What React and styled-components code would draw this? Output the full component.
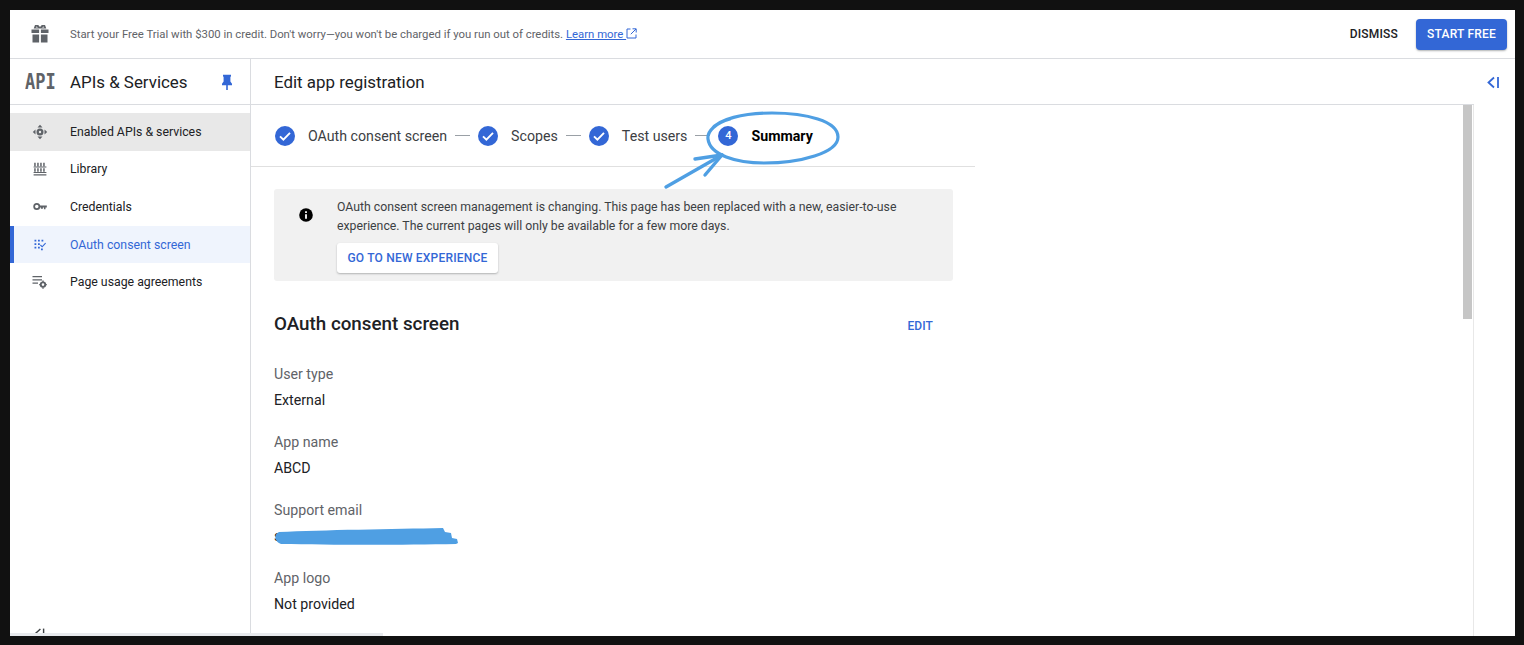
import React from "react";
import styled, { createGlobalStyle } from "styled-components";

const GlobalStyle = createGlobalStyle`
  html, body {
    margin: 0;
    height: 100%;
    background: #111;
    overflow: hidden;
  }
  * { box-sizing: border-box; }
`;

const navItems = [
  { label: "Enabled APIs & services", icon: "move", state: "hover" },
  { label: "Library", icon: "library" },
  { label: "Credentials", icon: "key" },
  { label: "OAuth consent screen", icon: "oauth", state: "active" },
  { label: "Page usage agreements", icon: "usage" },
];

const steps = [
  { label: "OAuth consent screen", done: true },
  { label: "Scopes", done: true },
  { label: "Test users", done: true },
  { label: "Summary", number: 4 },
];

const fields = [
  { label: "User type", value: "External" },
  { label: "App name", value: "ABCD" },
  { label: "Support email", value: "s", redacted: true },
  { label: "App logo", value: "Not provided" },
];

function GiftIcon() {
  return (
    <svg width="20" height="20" viewBox="0 0 20 20" fill="#5f6368">
      <path d="M1.500 5.500h7.600v3.600H1.500zM10.900 5.500h7.600v3.600h-7.600zM2.500 10.500h6.600v8h-6.600zM10.900 10.500h6.600v8h-6.600z" />
      <path d="M5 1h3.200L10 3l1.800-2H15l1.300 3.500H3.700z" />
      <path d="M6.400 2.500l-.6 1h2.300zM13.600 2.500l.6 1h-2.300z" fill="#fff" />
    </svg>
  );
}

function NavIcon({ name }) {
  if (name === "move") {
    return (
      <svg width="16" height="16" viewBox="0 0 16 16" fill="#5f6368">
        <path d="M8 .8l2.500 2.700h-5zM8 15.200l2.500-2.700h-5zM.8 8l2.700-2.500v5zM15.200 8l-2.700-2.500v5z" />
        <path d="M8 4.500a3.500 3.500 0 1 1 0 7 3.500 3.500 0 0 1 0-7zm0 2.300a1.200 1.200 0 1 0 0 2.400 1.200 1.200 0 0 0 0-2.400z" />
      </svg>
    );
  }
  if (name === "library") {
    return (
      <svg width="14" height="14" viewBox="0 0 14 14" fill="#5f6368">
        <path d="M1.200 .8h1.500v3.600H1.200zM4.200 .8h1.500v3.600H4.200zM7.200 .8h1.500v3.600H7.200zM10.200 .8h1.500v3.600h-1.500zM1.200 6.200h1.500v3.600H1.200zM4.200 6.200h1.500v3.600H4.200zM7.200 6.200h1.500v3.600H7.200zM10.200 6.200h1.500v3.600h-1.500z" />
        <path d="M.6 4.600h12.800v.9H.6zM.6 10h12.800v.9H.6zM.6 12.200h12.800v1.300H.6z" />
      </svg>
    );
  }
  if (name === "key") {
    return (
      <svg width="14" height="9" viewBox="0 0 16 10" fill="none">
        <circle cx="4.300" cy="5" r="3" stroke="#5f6368" strokeWidth="2" />
        <path d="M7.500 3.800h8.300v2.400h-1.500v1.800h-1.800V6.200h-1.200v1.400H9V6.200H7.500z" fill="#5f6368" />
      </svg>
    );
  }
  if (name === "oauth") {
    return (
      <svg width="12" height="12" viewBox="0 0 12 12" fill="#3367d6">
        <path d="M.5.800h1.800v1.800H.5zM4 .8h1.800v1.800H4zM7.500.8h1.800v1.800H7.500zM.5 4.200h1.800V6H.5zM4 4.200h1.800V6H4zM.5 7.800h1.800v1.800H.5zM4 7.800h1.800v1.800H4z" />
        <path d="M6.800 5.600l1.400 1.400 3-3.200.8.800-3.800 4-2.200-2.200zM7 9.400h1.800v1.800H7z" />
      </svg>
    );
  }
  return (
    <svg width="16" height="14" viewBox="0 0 16 14" fill="#5f6368">
      <path d="M.5 1h9.500v1.300H.5zM.5 4.200h9.500v1.300H.5zM.5 7.400h5.500v1.300H.5z" />
      <path d="M11 6.400a3.200 3.200 0 1 1 0 6.400 3.200 3.200 0 0 1 0-6.400zm0 1.900a1.300 1.300 0 1 0 0 2.600 1.300 1.300 0 0 0 0-2.600z" />
      <path d="M10.300 5.500h1.400v1.500h-1.400zM10.300 12.200h1.400v1.500h-1.400zM7.200 9h1.500v1.300H7.200zM13.300 9h1.500v1.300h-1.500z" />
    </svg>
  );
}

function PinIcon() {
  return (
    <svg width="12" height="16" viewBox="0 0 12 16" fill="#3367d6">
      <path d="M2 .8h8v1.400L9.400 3v4.600l1.600 2.200v1.500H6.800V16H5.200v-4.700H1V9.800l1.600-2.200V3L2 2.200z" />
    </svg>
  );
}

function CollapseIcon({ color, size = 15 }) {
  return (
    <svg width={size} height={size} viewBox="0 0 15 15" fill="none" stroke={color} strokeWidth="1.800">
      <path d="M8 2.500L2.500 7.500 8 12.500" />
      <path d="M12 2v11" />
    </svg>
  );
}

function ExternalIcon() {
  return (
    <svg width="11" height="11" viewBox="0 0 11 11" fill="none" stroke="#3367d6" strokeWidth="1">
      <path d="M4.500 1H1v9h9V6.500" />
      <path d="M6.500 .8h3.700v3.700M10 1L4.800 6.200" />
    </svg>
  );
}

function CheckBadge() {
  return (
    <svg width="20" height="20" viewBox="0 0 20 20">
      <circle cx="10" cy="10" r="10" fill="#3367d6" />
      <path d="M5 10.300l3.400 3.400 6.600-6.800" fill="none" stroke="#fff" strokeWidth="1.900" />
    </svg>
  );
}

function InfoIcon() {
  return (
    <svg width="14" height="14" viewBox="0 0 14 14">
      <circle cx="7" cy="7" r="6.800" fill="#000" />
      <path d="M6.100 6.200h1.800v4.600H6.100zM6.100 3.300h1.800v1.800H6.100z" fill="#fff" />
    </svg>
  );
}

function SummaryScribble() {
  return (
    <Scribble width="190" height="90" viewBox="0 0 190 90" fill="none" stroke="#4f9fe3" strokeLinecap="round" strokeLinejoin="round">
      <path
        d="M51 25C58 14 84 8 112 8c34 0 66 8 66 24 0 16-38 26-74 26-28 0-54-8-56-24-1-8 8-16 22-20"
        strokeWidth="3.200"
      />
      <path d="M6 82L62 50" strokeWidth="3.400" />
      <path d="M35 54L62 50 45 70" strokeWidth="3.400" />
    </Scribble>
  );
}

export default function App() {
  return (
    <>
      <GlobalStyle />
      <Frame>
        <Banner>
          <GiftSlot>
            <GiftIcon />
          </GiftSlot>
          <BannerText>
            Start your Free Trial with $300 in credit. Don't worry—you won't be charged if you run out of credits.{" "}
            <BannerLink>
              Learn more <ExternalIcon />
            </BannerLink>
          </BannerText>
          <DismissButton>DISMISS</DismissButton>
          <StartButton>START FREE</StartButton>
        </Banner>
        <Body>
          <Sidebar>
            <SidebarHeader>
              <ApiMark>API</ApiMark>
              <SidebarTitle>APIs &amp; Services</SidebarTitle>
              <PinIcon />
            </SidebarHeader>
            <NavList>
              {navItems.map((item) => (
                <NavRow key={item.label} $state={item.state}>
                  <NavIconSlot>
                    <NavIcon name={item.icon} />
                  </NavIconSlot>
                  {item.label}
                </NavRow>
              ))}
            </NavList>
            <SidebarFooter>
              <CollapseIcon color="#3c4043" size={12} />
            </SidebarFooter>
            <BottomScroll />
          </Sidebar>
          <Main>
            <PageHeader>Edit app registration</PageHeader>
            <ScrollArea>
              <Content>
                <Stepper>
                  {steps.map((step, index) => (
                    <React.Fragment key={step.label}>
                      {index > 0 && <StepLine />}
                      <Step>
                        {step.done ? <CheckBadge /> : <NumberBadge>{step.number}</NumberBadge>}
                        <StepLabel $current={!step.done}>{step.label}</StepLabel>
                      </Step>
                    </React.Fragment>
                  ))}
                  <SummaryScribble />
                </Stepper>
                <Details>
                  <Notice>
                    <NoticeIcon>
                      <InfoIcon />
                    </NoticeIcon>
                    <NoticeBody>
                      <NoticeText>
                        OAuth consent screen management is changing. This page has been replaced with a new, easier-to-use
                        experience. The current pages will only be available for a few more days.
                      </NoticeText>
                      <NoticeButton>GO TO NEW EXPERIENCE</NoticeButton>
                    </NoticeBody>
                  </Notice>
                  <SectionHead>
                    <SectionTitle>OAuth consent screen</SectionTitle>
                    <EditButton>EDIT</EditButton>
                  </SectionHead>
                  {fields.map((field) => (
                    <Field key={field.label}>
                      <FieldLabel>{field.label}</FieldLabel>
                      <FieldValue>
                        {field.value}
                        {field.redacted && (
                          <Redaction width="186" height="20" viewBox="0 0 186 20" fill="#4f9fe3">
                            <path d="M6 5C50 3 120 2 170 1l2 4 6 1 1 5 5 1 1 4-2 1C130 18 60 18 8 17 2 15 0 8 6 5z" />
                          </Redaction>
                        )}
                      </FieldValue>
                    </Field>
                  ))}
                </Details>
              </Content>
              <ScrollTrack>
                <ScrollThumb />
              </ScrollTrack>
            </ScrollArea>
          </Main>
          <RightRail>
            <RailButton>
              <CollapseIcon color="#3367d6" />
            </RailButton>
          </RightRail>
        </Body>
      </Frame>
    </>
  );
}

const Frame = styled.div`
  width: 1505px;
  height: 626px;
  margin: 10px 0 0 10px;
  background: #fff;
  display: flex;
  flex-direction: column;
  overflow: hidden;
  font-family: Roboto, "Liberation Sans", sans-serif;
  color: #202124;
`;

const Banner = styled.div`
  height: 49px;
  flex: none;
  display: flex;
  align-items: center;
  padding: 0 8px 0 0;
  border-bottom: 1px solid #dadce0;
`;

const GiftSlot = styled.div`
  width: 60px;
  display: flex;
  justify-content: center;
`;

const BannerText = styled.div`
  flex: 1;
  font-size: 11.350px;
  color: #5f6368;
`;

const BannerLink = styled.span`
  color: #3367d6;
  text-decoration: underline;
  svg {
    vertical-align: -1px;
  }
`;

const DismissButton = styled.span`
  font-size: 12px;
  font-weight: 500;
  letter-spacing: 0.2px;
  color: #202124;
  margin-right: 18px;
`;

const StartButton = styled.span`
  width: 91px;
  height: 31px;
  display: flex;
  align-items: center;
  justify-content: center;
  background: #3367d6;
  border-radius: 4px;
  color: #fff;
  font-size: 12px;
  font-weight: 500;
  letter-spacing: 0.2px;
  box-shadow: 0 1px 2px rgba(60, 64, 67, 0.4);
`;

const Body = styled.div`
  flex: 1;
  display: flex;
  min-height: 0;
`;

const Sidebar = styled.aside`
  position: relative;
  width: 241px;
  flex: none;
  display: flex;
  flex-direction: column;
  border-right: 1px solid #dadce0;
`;

const SidebarHeader = styled.div`
  height: 46px;
  flex: none;
  display: flex;
  align-items: center;
  padding: 0 17px 0 15px;
  border-bottom: 1px solid #dadce0;
`;

const ApiMark = styled.span`
  width: 45px;
  font-family: "DejaVu Sans Mono", "Liberation Mono", monospace;
  font-size: 17px;
  font-weight: 700;
  color: #5f6368;
  transform: scaleY(1.2);
`;

const SidebarTitle = styled.span`
  flex: 1;
  font-size: 16.900px;
  color: #202124;
`;

const NavList = styled.nav`
  padding-top: 8px;
  display: flex;
  flex-direction: column;
`;

const NavRow = styled.div`
  height: 37.600px;
  display: flex;
  align-items: center;
  font-size: 12.300px;
  color: ${(p) => (p.$state === "active" ? "#3367d6" : "#202124")};
  background: ${(p) => (p.$state === "active" ? "#eff4fd" : p.$state === "hover" ? "#e8e8e8" : "transparent")};
  box-shadow: ${(p) => (p.$state === "active" ? "inset 4px 0 0 #3367d6" : "none")};
`;

const NavIconSlot = styled.span`
  width: 60px;
  flex: none;
  display: flex;
  justify-content: center;
`;

const SidebarFooter = styled.div`
  margin-top: auto;
  height: 12px;
  padding-left: 24px;
  overflow: hidden;
`;

const BottomScroll = styled.div`
  position: absolute;
  left: 0;
  bottom: 0;
  width: 373px;
  height: 3px;
  background: #e8eaed;
  z-index: 2;
`;

const Main = styled.main`
  flex: 1;
  min-width: 0;
  display: flex;
  flex-direction: column;
`;

const PageHeader = styled.div`
  height: 46px;
  flex: none;
  display: flex;
  align-items: center;
  padding-left: 23px;
  font-size: 16.900px;
  border-bottom: 1px solid #dadce0;
`;

const ScrollArea = styled.div`
  flex: 1;
  min-height: 0;
  display: flex;
  overflow: hidden;
`;

const Content = styled.div`
  flex: 1;
  min-width: 0;
`;

const Stepper = styled.div`
  position: relative;
  width: 724px;
  height: 62px;
  display: flex;
  align-items: center;
  padding-left: 24px;
  border-bottom: 1px solid #e0e0e0;
`;

const Step = styled.div`
  display: flex;
  align-items: center;
  gap: 13px;
`;

const StepLabel = styled.span`
  font-size: 14.200px;
  font-weight: ${(p) => (p.$current ? 700 : 400)};
  color: ${(p) => (p.$current ? "#000" : "#3c4043")};
`;

const StepLine = styled.span`
  width: 15px;
  height: 1px;
  margin: 0 8px;
  background: #9aa0a6;
`;

const NumberBadge = styled.span`
  width: 20px;
  height: 20px;
  border-radius: 50%;
  background: #3367d6;
  color: #fff;
  font-size: 11px;
  font-weight: 500;
  display: flex;
  align-items: center;
  justify-content: center;
`;

const Scribble = styled.svg`
  position: absolute;
  left: 409px;
  top: 0;
  pointer-events: none;
`;

const Details = styled.div`
  width: 702px;
  padding: 22px 0 0 23px;
`;

const Notice = styled.div`
  height: 92px;
  display: flex;
  background: #f1f1f1;
  border-radius: 3px;
`;

const NoticeIcon = styled.div`
  width: 63px;
  flex: none;
  padding: 18px 0 0 25px;
`;

const NoticeBody = styled.div`
  padding-top: 9px;
`;

const NoticeText = styled.p`
  margin: 0;
  width: 590px;
  font-size: 12.270px;
  line-height: 19px;
  color: #3c4043;
`;

const NoticeButton = styled.div`
  width: 161px;
  height: 30px;
  margin-top: 7px;
  display: flex;
  align-items: center;
  justify-content: center;
  background: #fff;
  border-radius: 3px;
  color: #3367d6;
  font-size: 12px;
  font-weight: 500;
  letter-spacing: 0.2px;
  box-shadow: 0 1px 2px rgba(60, 64, 67, 0.35);
`;

const SectionHead = styled.div`
  display: flex;
  align-items: center;
  justify-content: space-between;
  height: 28px;
  margin: 29px 20px 26px 0;
`;

const SectionTitle = styled.h2`
  margin: 0;
  font-size: 18.800px;
  font-weight: 500;
  color: #202124;
`;

const EditButton = styled.span`
  padding-top: 3px;
  font-size: 12px;
  font-weight: 500;
  letter-spacing: 0.1px;
  color: #3367d6;
`;

const Field = styled.div`
  height: 68px;
`;

const FieldLabel = styled.div`
  font-size: 14.200px;
  line-height: 20px;
  color: #5f6368;
`;

const FieldValue = styled.div`
  position: relative;
  margin-top: 6px;
  font-size: 14.200px;
  line-height: 20px;
  color: #202124;
`;

const Redaction = styled.svg`
  position: absolute;
  left: -1px;
  top: 1px;
`;

const ScrollTrack = styled.div`
  width: 11px;
  flex: none;
  padding-right: 1px;
  border-right: 1px solid #e8e8e8;
`;

const ScrollThumb = styled.div`
  width: 9px;
  height: 214px;
  background: #c6c6c6;
`;

const RightRail = styled.div`
  width: 41px;
  flex: none;
`;

const RailButton = styled.div`
  height: 46px;
  display: flex;
  align-items: center;
  justify-content: center;
  padding-right: 2px;
`;
